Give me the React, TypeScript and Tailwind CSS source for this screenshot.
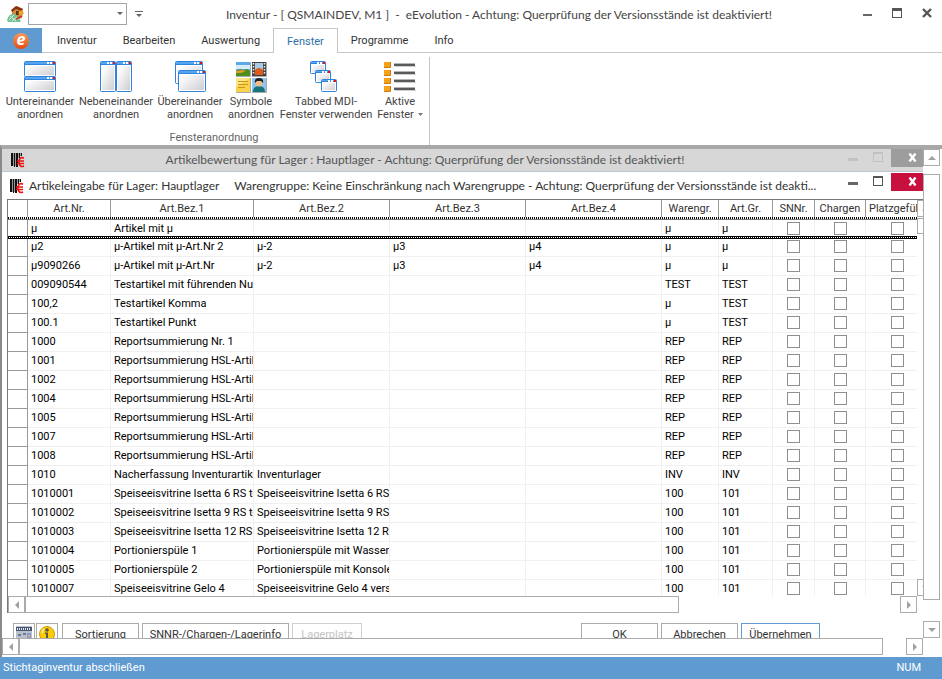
import { FC, ReactNode } from "react";
import clsx from "clsx";

type Direction = "up" | "down" | "left" | "right";

const arrows: Record<Direction, string> = {
  up: "M0 6 L4 2 L8 6Z",
  down: "M0 2 L8 2 L4 6Z",
  left: "M6 0 L6 8 L2 4Z",
  right: "M2 0 L6 4 L2 8Z",
};

const ScrollButton: FC<{ direction: Direction; label: string }> = ({
  direction,
  label,
}) => (
  <button
    aria-label={label}
    className="flex h-[17px] w-[17px] shrink-0 items-center justify-center border border-[#ababab] bg-white"
  >
    <svg viewBox="0 0 8 8" className="h-2 w-2 fill-[#a0a0a0]">
      <path d={arrows[direction]} />
    </svg>
  </button>
);

const WindowControls: FC<{ muted?: boolean }> = ({ muted }) => (
  <div className="flex shrink-0 self-start">
    <button aria-label="Minimieren" className="flex h-[17px] w-6 justify-center pt-[9px]">
      <span
        className={clsx("h-[3px] w-2.5", muted ? "bg-[#c2c2c2]" : "bg-[#666]")}
      />
    </button>
    <button aria-label="Maximieren" className="flex h-[17px] w-[26px] justify-center pt-[3px]">
      <span
        className={clsx(
          "h-2.5 w-2.5 border border-t-2",
          muted ? "border-[#c2c2c2]" : "border-[#555]",
        )}
      />
    </button>
    <button
      aria-label="Schließen"
      className={clsx(
        "flex h-[18px] w-8 items-center justify-end pb-0.5 pr-1.5 text-white",
        muted ? "bg-[#9d9d9d]" : "bg-[#c8103e]",
      )}
    >
      <svg viewBox="0 0 9 9" className="h-[9px] w-[9px]">
        <path d="M1.500 .5 L7.500 8.5 M7.500 .5 L1.500 8.5" stroke="currentColor" strokeWidth="2.400" />
      </svg>
    </button>
  </div>
);

const BarcodeIcon: FC = () => (
  <svg viewBox="0 0 14 15" className="h-[15px] w-3.5 shrink-0">
    <path d="M2 0h1v13H2zM4 0h1v13H4zM7 0h1v5H7zM9 0h1v3H9z" fill="#999" />
    <path d="M0 0h2v13H0zM3 0h1v14H3zM5 0h2v14H5zM8 0h1v5H8zM10 0h1v3h-1z" fill="#111" />
    <path
      d="M13 5.200C10 3.600 8 5.500 8 9s2 5.400 5 4M6 8h7M6 10.500h7"
      fill="none"
      stroke="#e11"
      strokeWidth="1.600"
    />
  </svg>
);

/* small window drawing shared by the ribbon icons */
const Win: FC<{ x: number; y: number; w: number; h: number; bar?: number }> = ({
  x,
  y,
  w,
  h,
  bar = 4,
}) => (
  <g>
    <rect x={x + 0.5} y={y + 0.5} width={w - 1} height={h - 1} rx="1" fill="url(#glass)" stroke="#2f83dd" />
    <rect x={x + 1} y={y + 1} width={w - 2} height={bar - 1} fill="#56a5f0" />
    <rect x={x + 1} y={y + bar - 1} width={w - 2} height="1" fill="#2f83dd" />
    <rect x={x + 1.5} y={y + bar + 0.5} width={w - 3} height={h - bar - 2} fill="none" stroke="#fff" />
    <rect x={x + w - 9} y={y + 1} width="2" height="2" fill="#fff" />
    <rect x={x + w - 6} y={y + 1} width="2" height="2" fill="#fff" />
    <rect x={x + w - 3} y={y + 1} width="2" height="2" fill="#f01010" />
  </g>
);

const Icon: FC<{ children: ReactNode }> = ({ children }) => (
  <svg viewBox="0 0 32 32" className="h-8 w-8">
    <defs>
      <linearGradient id="glass" x1="0" y1="0" x2="1" y2="1">
        <stop offset="0.2" stopColor="#fff" />
        <stop offset="1" stopColor="#cacacf" />
      </linearGradient>
    </defs>
    {children}
  </svg>
);

const ribbonItems = [
  {
    lines: ["Untereinander", "anordnen"],
    width: "w-[74px]",
    icon: (
      <Icon>
        <Win x={0} y={0} w={32} h={16} />
        <Win x={0} y={15} w={32} h={16} />
      </Icon>
    ),
  },
  {
    lines: ["Nebeneinander", "anordnen"],
    width: "w-[78px]",
    icon: (
      <Icon>
        <Win x={0} y={0} w={16} h={31} />
        <Win x={16} y={0} w={16} h={31} />
      </Icon>
    ),
  },
  {
    lines: ["Übereinander", "anordnen"],
    width: "w-[70px]",
    icon: (
      <Icon>
        <Win x={1} y={0} w={28} h={23} />
        <Win x={4} y={9} w={28} h={22} />
      </Icon>
    ),
  },
  {
    lines: ["Symbole", "anordnen"],
    width: "w-[52px]",
    icon: (
      <Icon>
        <rect x="1" y="1" width="14" height="14" fill="#5aa9ea" />
        <path d="M1 4h14v4H1z" fill="#d6ecfa" />
        <path d="M1 10l4-2 4 1 3-1 3 2v5H1z" fill="#4c8f1c" />
        <path d="M1 10l6-1 4 1-5 2H1z" fill="#e59a2c" />
        <path d="M15.500 1v14.500H1M31.500 1v14.500H17M15.500 17v14.500H1M31.500 17v14.500H17" fill="none" stroke="#aaa" />
        <rect x="17" y="1" width="14" height="14" fill="#444" />
        <rect x="20" y="2" width="8" height="12" fill="#a8cbe6" />
        <path d="M20 9q4-4 8 0v5h-8z" fill="#de5b1b" />
        <path d="M18.500 2v12M29.500 2v12" stroke="#eee" strokeWidth="1.500" strokeDasharray="1.500 1.500" />
        <rect x="1" y="17" width="14" height="14" fill="#fbd34b" />
        <path d="M1 17h14L1 26z" fill="#fde589" />
        <path d="M3 20.500h10M3 23.500h10M3 26.500h7" stroke="#c9971a" />
        <rect x="17" y="17" width="14" height="14" fill="#8fc6ee" />
        <path d="M18 31q0-6 6-6t6 6z" fill="#16757c" />
        <circle cx="24" cy="22" r="3.500" fill="#f2bd85" />
        <path d="M20 22q-1-5 4-5t4 5l-2-2h-4z" fill="#222" />
      </Icon>
    ),
  },
  {
    lines: ["Tabbed MDI-", "Fenster verwenden"],
    width: "w-[98px]",
    icon: (
      <Icon>
        <Win x={0} y={0} w={16} h={13} bar={3} />
        <Win x={5} y={9} w={16} h={13} bar={3} />
        <Win x={11} y={18} w={16} h={13} bar={3} />
      </Icon>
    ),
  },
  {
    lines: ["Aktive", "Fenster"],
    width: "w-[50px]",
    menu: true,
    icon: (
      <Icon>
        {[0, 8, 16, 24].map((y) => (
          <g key={y}>
            <rect x="0" y={y + 1} width="6" height="6" fill="#f7a11b" />
            <path d={`M0 ${y + 6.5}h6.500V${y + 1}`} fill="none" stroke="#c97c10" />
            <rect x="10" y={y + 2} width="21" height="1" fill="#b5b5b5" />
            <rect x="10" y={y + 3} width="21" height="2" fill="#5a5a5a" />
            <rect x="11" y={y + 5} width="21" height="1" fill="#cfcfcf" />
          </g>
        ))}
      </Icon>
    ),
  },
];

const tabs = ["Inventur", "Bearbeiten", "Auswertung", "Fenster", "Programme", "Info"];

const columns = [
  { title: "Art.Nr.", width: "w-[83px]" },
  { title: "Art.Bez.1", width: "w-[143px]" },
  { title: "Art.Bez.2", width: "w-[136px]" },
  { title: "Art.Bez.3", width: "w-[136px]" },
  { title: "Art.Bez.4", width: "w-[136px]" },
  { title: "Warengr.", width: "w-[57px]" },
  { title: "Art.Gr.", width: "w-[54px]" },
  { title: "SNNr.", width: "w-[42px]" },
  { title: "Chargen", width: "w-[51px]" },
  { title: "Platzgeführt", width: "" },
];

const rows = [
  ["µ", "Artikel mit µ", "", "", "", "µ", "µ"],
  ["µ2", "µ-Artikel mit µ-Art.Nr 2", "µ-2", "µ3", "µ4", "µ", "µ"],
  ["µ9090266", "µ-Artikel mit µ-Art.Nr", "µ-2", "µ3", "µ4", "µ", "µ"],
  ["009090544", "Testartikel mit führenden Nullen", "", "", "", "TEST", "TEST"],
  ["100,2", "Testartikel Komma", "", "", "", "µ", "TEST"],
  ["100.1", "Testartikel Punkt", "", "", "", "µ", "TEST"],
  ["1000", "Reportsummierung Nr. 1", "", "", "", "REP", "REP"],
  ["1001", "Reportsummierung HSL-Artikel", "", "", "", "REP", "REP"],
  ["1002", "Reportsummierung HSL-Artikel", "", "", "", "REP", "REP"],
  ["1004", "Reportsummierung HSL-Artikel", "", "", "", "REP", "REP"],
  ["1005", "Reportsummierung HSL-Artikel", "", "", "", "REP", "REP"],
  ["1007", "Reportsummierung HSL-Artikel", "", "", "", "REP", "REP"],
  ["1008", "Reportsummierung HSL-Artikel", "", "", "", "REP", "REP"],
  ["1010", "Nacherfassung Inventurartikel", "Inventurlager", "", "", "INV", "INV"],
  ["1010001", "Speiseeisvitrine Isetta 6 RS to", "Speiseeisvitrine Isetta 6 RS to", "", "", "100", "101"],
  ["1010002", "Speiseeisvitrine Isetta 9 RS to", "Speiseeisvitrine Isetta 9 RS to", "", "", "100", "101"],
  ["1010003", "Speiseeisvitrine Isetta 12 RS to", "Speiseeisvitrine Isetta 12 RS to", "", "", "100", "101"],
  ["1010004", "Portionierspüle 1", "Portionierspüle mit Wasserhahn", "", "", "100", "101"],
  ["1010005", "Portionierspüle 2", "Portionierspüle mit Konsole und", "", "", "100", "101"],
  ["1010007", "Speiseeisvitrine Gelo 4", "Speiseeisvitrine Gelo 4 verschl.", "", "", "100", "101"],
];

const TitleBar: FC = () => (
  <header className="flex h-7 items-center pl-[7px]">
    <svg viewBox="0 0 18 18" className="h-[18px] w-[18px] shrink-0">
      <path d="M5 5l5-4 6 3-1 9-6 2-4-4z" fill="#c98d48" />
      <path d="M4 5l5-4 7 3-2 2-5-2-4 3z" fill="#8d2f12" />
      <path d="M9 6h3v4H9z" fill="#5b3513" />
      <circle cx="14" cy="8" r="2.500" fill="#f3a12b" />
      <path d="M0 15q2-7 7-6 4 1 7 8H1z" fill="#74c295" />
      <path d="M2 15l5-5M5 16l5-4M3 11l6 5" stroke="#d2f0dc" />
      <path d="M9 14l6-3" stroke="#c23b20" strokeWidth="1.500" />
    </svg>
    <div className="relative ml-[3px]">
      <select
        aria-label="Schnellsuche"
        className="block h-[22px] w-[99px] appearance-none border border-[#a5a5a5] bg-white"
      />
      <svg viewBox="0 0 6 3" className="pointer-events-none absolute right-1 top-[9px] h-[3px] w-1.5 fill-[#666]">
        <path d="M0 0h6L3 3z" />
      </svg>
    </div>
    <button aria-label="Symbolleiste anpassen" className="ml-2">
      <svg viewBox="0 0 8 7" className="h-[7px] w-2 fill-[#666]">
        <path d="M0 0h8v1H0zM1 3h6L4 6z" />
      </svg>
    </button>
    <h1 className="flex-1 whitespace-nowrap pr-2 pt-0.5 text-center font-['Lato',sans-serif] text-xs text-[#444]">
      Inventur - [ QSMAINDEV, M1 ]&nbsp; -&nbsp; eEvolution - Achtung: Querprüfung der
      Versionsstände ist deaktiviert!
    </h1>
    <div className="flex h-7 shrink-0 gap-5 pr-2.5 pt-2">
      <button aria-label="Minimieren" className="flex h-2.5 w-[9px] items-start pt-1.5">
        <span className="h-0.5 w-full bg-[#666]" />
      </button>
      <button aria-label="Maximieren" className="h-2.5 w-2.5 border border-t-[3px] border-[#555]" />
      <button aria-label="Schließen" className="flex h-2.5">
        <svg viewBox="0 0 10 10" className="h-2.5 w-2.5">
          <path d="M1 1l8 8M9 1L1 9" stroke="#555" strokeWidth="2.400" />
        </svg>
      </button>
    </div>
  </header>
);

const Ribbon: FC = () => (
  <>
    <nav className="flex h-[25px]">
      <button
        aria-label="Datei"
        className="flex w-[42px] items-center justify-center bg-[#5f9bd1]"
      >
        <span className="flex h-4 w-4 items-center justify-center rounded-full bg-linear-to-b from-[#f89a55] to-[#e2490c] pb-1 font-['Open_Sans',sans-serif] text-base font-bold italic leading-3 text-white">
          e
        </span>
      </button>
      <div className="w-0.5 border-b border-[#c6c6c6]" />
      {tabs.map((tab) => (
        <button
          key={tab}
          className={clsx(
            "px-[13px] pt-0.5",
            tab === "Fenster"
              ? "border border-b-0 border-[#c6c6c6] text-[#2f6ea5]"
              : "border-b border-[#c6c6c6] text-[#333]",
          )}
        >
          {tab}
        </button>
      ))}
      <div className="flex-1 border-b border-[#c6c6c6]" />
    </nav>
    <section className="flex h-23 pt-1">
      <div className="flex flex-col border-r border-[#c6c6c6] pl-[3px] pr-1">
        <div className="flex flex-1 items-start pt-1">
          {ribbonItems.map(({ lines, width, icon, menu }) => (
            <button
              key={lines.join(" ")}
              className={clsx("flex flex-col items-center leading-[13px]", width)}
            >
              {icon}
              <span className="mt-0.5 whitespace-nowrap">{lines[0]}</span>
              <span className="flex items-center gap-1 whitespace-nowrap">
                {lines[1]}
                {menu && (
                  <svg viewBox="0 0 5 3" className="h-[3px] w-[5px] fill-[#777]">
                    <path d="M0 0h5L2.500 3z" />
                  </svg>
                )}
              </span>
            </button>
          ))}
        </div>
        <p className="pb-px text-center leading-3 text-[#666]">Fensteranordnung</p>
      </div>
    </section>
  </>
);

const Separator: FC<{ heavy?: boolean }> = ({ heavy }) => (
  <tr aria-hidden="true">
    <td colSpan={11} className="h-[3px] p-0">
      <div
        className={clsx(
          "h-[3px] bg-[repeating-linear-gradient(90deg,#000_0_1px,#fff_1px_2px)]",
          heavy ? "border-y border-black" : "border-b border-[#777]",
        )}
      />
    </td>
  </tr>
);

const ArticleTable: FC = () => (
  <table className="w-full min-w-[922px] table-fixed border-separate border-spacing-0 text-black">
    <colgroup>
      <col className="w-5" />
      {columns.map(({ title, width }) => (
        <col key={title} className={width} />
      ))}
    </colgroup>
    <thead>
      <tr className="h-[17px] leading-4 text-[#333]">
        <td className="border-r border-[#999]" />
        {columns.map(({ title }) => (
          <th
            key={title}
            className="overflow-hidden whitespace-nowrap border-r border-[#999] p-0 px-[3px] text-center font-normal"
          >
            {title}
          </th>
        ))}
      </tr>
      <Separator />
    </thead>
    {rows.map((row, index) => (
      <tbody key={row[0]} className="leading-[15px]">
        <tr
          className={clsx(
            index === 0 && "h-4",
            index === 1 && "h-[18px]",
            index > 1 && "h-[19px]",
          )}
        >
          <td className={clsx("border-r border-[#999] p-0", index > 0 && "border-b")} />
          {row.map((cell, i) => (
            <td
              key={i}
              className={clsx(
                "overflow-hidden whitespace-nowrap border-r border-[#f0f0f0] p-0 pl-[3px]",
                index > 0 && "border-b pb-0.5",
              )}
            >
              {cell}
            </td>
          ))}
          {["SNNr.", "Chargen", "Platzgeführt"].map((name) => (
            <td
              key={name}
              className={clsx(
                "border-r border-[#f0f0f0] p-0 leading-none",
                index > 0 && "border-b pb-0.5",
              )}
            >
              <input
                type="checkbox"
                aria-label={`${name} ${row[0]}`}
                className="mx-auto block h-[13px] w-[13px] appearance-none border border-[#8f8f8f] bg-white"
              />
            </td>
          ))}
        </tr>
        {index === 0 && <Separator heavy />}
      </tbody>
    ))}
  </table>
);

const FormButton: FC<{ children: ReactNode; className: string }> = ({
  children,
  className,
}) => (
  <button className={clsx("h-6 shrink-0 border", className)}>{children}</button>
);

const FormBar: FC = () => (
  <div className="flex h-[25px] justify-between overflow-hidden pl-[11px] pr-[103px] pt-2.5 text-[#333]">
    <div className="flex items-start gap-[3px]">
      <div className="flex gap-px">
        <button aria-label="Rechner" className="flex h-6 w-[22px] justify-center border border-[#ababab] pt-0.5">
          <svg viewBox="0 0 16 16" className="h-4 w-4">
            <rect width="16" height="16" rx="1" fill="#b9c0cc" />
            <path d="M0 1h16v4H0z" fill="#4b5873" />
            <path d="M1 3h14" stroke="#e5e9f2" strokeWidth="2" strokeDasharray="1 1" />
            <path d="M2 8h3v2H2zM7 7h3v2H7zM2 12h3v2H2zM7 12h3v2H7z" fill="#6d7891" />
            <path d="M11 7h4v7h-4z" fill="#7d9dd0" />
            <path d="M12 9h2v2h-2z" fill="#e9a86b" />
          </svg>
        </button>
        <button aria-label="Information" className="mr-px flex h-6 w-[22px] justify-center border border-[#ababab] pt-0.5">
          <svg viewBox="0 0 16 16" className="h-4 w-4">
            <circle cx="8" cy="8" r="7.500" fill="#fc0" stroke="#c99a1b" />
            <circle cx="8" cy="4" r="1.800" fill="#555" />
            <path d="M6 6.500h3V13H7V8H6z" fill="#555" />
            <path d="M3 7q0-3 2-4" stroke="#fff2a0" strokeWidth="1.500" fill="none" />
          </svg>
        </button>
      </div>
      <FormButton className="w-[77px] border-[#ababab]">Sortierung</FormButton>
      <FormButton className="w-[147px] border-[#ababab]">SNNR-/Chargen-/Lagerinfo</FormButton>
      <FormButton className="w-[70px] border-[#d0d0d0] text-[#c4c4c4]">Lagerplatz</FormButton>
    </div>
    <div className="flex items-start gap-[3px]">
      <FormButton className="w-[77px] border-[#ababab]">OK</FormButton>
      <FormButton className="w-[77px] border-[#ababab]">Abbrechen</FormButton>
      <FormButton className="w-[79px] border-[#5f9bd1]">Übernehmen</FormButton>
    </div>
  </div>
);

const ArticleWindow: FC = () => (
  <section className="flex flex-col border-t border-[#b9c6d2] bg-white">
    <div className="flex h-[27px] items-center pl-2 pt-px">
      <BarcodeIcon />
      <h2 className="ml-[5px] min-w-0 flex-1 whitespace-nowrap font-['Lato',sans-serif] text-xs text-[#333]">
        Artikeleingabe für Lager: Hauptlager&nbsp;&nbsp;&nbsp;&nbsp; Warengruppe: Keine Einschränkung
        nach Warengruppe - Achtung: Querprüfung der Versionsstände ist deakti...
      </h2>
      <WindowControls />
    </div>
    <div className="ml-[5px] border-l border-t border-[#777]">
      <div className="flex h-[396px] overflow-hidden">
        <div className="min-w-0 flex-1 overflow-hidden">
          <ArticleTable />
        </div>
        <div className="flex w-1.5 flex-col overflow-hidden">
          <ScrollButton direction="up" label="Zeile nach oben" />
          <div className="mt-px h-4 w-[17px] border border-[#ababab]" />
          <div className="flex-1" />
          <ScrollButton direction="down" label="Zeile nach unten" />
        </div>
      </div>
      <div className="flex h-[17px] pr-1.5">
        <ScrollButton direction="left" label="Tabelle nach links" />
        <div className="flex-[653] border border-[#ababab]" />
        <div className="flex-[222]" />
        <ScrollButton direction="right" label="Tabelle nach rechts" />
      </div>
    </div>
    <FormBar />
  </section>
);

const Workspace: FC = () => (
  <main className="flex border-l-2 border-t-4 border-[#8a8a8a] border-t-[#a8a8a8] bg-white">
    <div className="flex min-w-0 flex-1 flex-col">
      <div className="flex h-[22px] items-center bg-[#d7d7d7] pl-[9px]">
        <BarcodeIcon />
        <h2 className="flex-1 whitespace-nowrap pr-4 text-center font-['Lato',sans-serif] text-xs text-[#555]">
          Artikelbewertung für Lager : Hauptlager - Achtung: Querprüfung der Versionsstände ist
          deaktiviert!
        </h2>
        <WindowControls muted />
      </div>
      <ArticleWindow />
      <div className="flex h-[19px] pb-0.5">
        <ScrollButton direction="left" label="Fenster nach links" />
        <div className="flex-[864] border border-[#ababab]" />
        <div className="flex-[23]" />
        <ScrollButton direction="right" label="Fenster nach rechts" />
      </div>
    </div>
    <div className="mr-0.5 flex w-[17px] flex-col pb-[19px]">
      <ScrollButton direction="up" label="Fenster nach oben" />
      <div className="mt-2 flex-[427] border border-[#ababab]" />
      <div className="flex-[21]" />
      <ScrollButton direction="down" label="Fenster nach unten" />
    </div>
  </main>
);

export default function App() {
  return (
    <div className="flex min-h-screen flex-col overflow-hidden bg-white font-['Roboto',Arial,sans-serif] text-[11px] text-[#444]">
      <TitleBar />
      <Ribbon />
      <Workspace />
      <footer className="flex flex-1 items-center justify-between bg-[#5f9bd1] pl-[3px] pr-[21px] leading-[22px] text-white">
        <span>Stichtaginventur abschließen</span>
        <span>NUM</span>
      </footer>
    </div>
  );
}
